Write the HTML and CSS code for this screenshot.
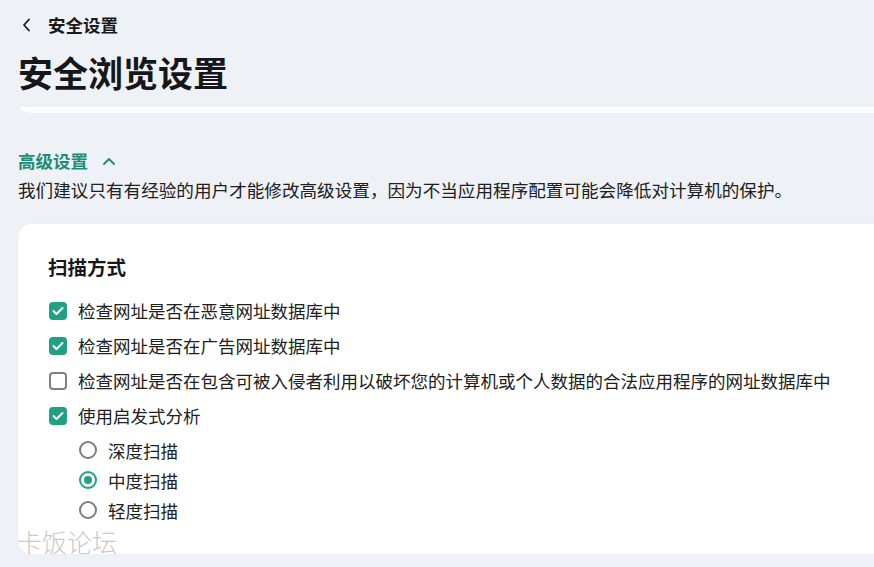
FILE: index.html
```html
<!DOCTYPE html>
<html lang="zh-CN">
<head>
<meta charset="utf-8">
<title>安全浏览设置</title>
<link rel="stylesheet" href="styles.css">
</head>
<body>
<div class="page">
  <div class="topbar">
    <svg class="back" width="12" height="14" viewBox="0 0 12 14"><path d="M8 1.5 L3 7 L8 12.5" fill="none" stroke="#1a1a1a" stroke-width="1.8" stroke-linecap="round" stroke-linejoin="round"/></svg>
    <span class="crumb">安全设置</span>
  </div>
  <h1 class="title">安全浏览设置</h1>
  <div class="prev-card"></div>

  <div class="adv-head">
    <span class="adv-title">高级设置</span>
    <svg class="up" width="14" height="10" viewBox="0 0 14 10"><path d="M2 8 L7 3 L12 8" fill="none" stroke="#1d8c74" stroke-width="1.8" stroke-linecap="round" stroke-linejoin="round"/></svg>
  </div>
  <p class="desc">我们建议只有有经验的用户才能修改高级设置，因为不当应用程序配置可能会降低对计算机的保护。</p>

  <div class="card">
    <h2 class="card-title">扫描方式</h2>
    <div class="checks">
      <div class="row"><span class="cb on"><svg width="12" height="10" viewBox="0 0 12 10"><path d="M1.5 5 L4.5 8 L10.5 2" fill="none" stroke="#fff" stroke-width="2" stroke-linecap="round" stroke-linejoin="round"/></svg></span><span>检查网址是否在恶意网址数据库中</span></div>
      <div class="row"><span class="cb on"><svg width="12" height="10" viewBox="0 0 12 10"><path d="M1.5 5 L4.5 8 L10.5 2" fill="none" stroke="#fff" stroke-width="2" stroke-linecap="round" stroke-linejoin="round"/></svg></span><span>检查网址是否在广告网址数据库中</span></div>
      <div class="row"><span class="cb"></span><span>检查网址是否在包含可被入侵者利用以破坏您的计算机或个人数据的合法应用程序的网址数据库中</span></div>
      <div class="row"><span class="cb on"><svg width="12" height="10" viewBox="0 0 12 10"><path d="M1.5 5 L4.5 8 L10.5 2" fill="none" stroke="#fff" stroke-width="2" stroke-linecap="round" stroke-linejoin="round"/></svg></span><span>使用启发式分析</span></div>
    </div>
    <div class="radios">
      <div class="rrow"><span class="rb"></span><span>深度扫描</span></div>
      <div class="rrow"><span class="rb on"></span><span>中度扫描</span></div>
      <div class="rrow"><span class="rb"></span><span>轻度扫描</span></div>
    </div>
  </div>
  <div class="watermark">卡饭论坛</div>
</div>
</body>
</html>
```

FILE: styles.css
```css
html, body {
  margin: 0;
  padding: 0;
}
body {
  background: #eef1f6;
  font-family: "Noto Sans CJK SC", "Noto Sans", sans-serif;
  color: #1f1f1f;
  overflow: hidden;
  width: 874px;
  height: 567px;
}
.page {
  position: relative;
  padding: 12px 0 0 18px;
  height: 555px;
}
.topbar {
  height: 26px;
  display: flex;
  align-items: center;
}
.back {
  margin-left: 3px;
  margin-right: 15px;
  display: block;
}
.crumb {
  font-size: 17.5px;
  font-weight: 700;
  line-height: 26px;
  color: #1a1a1a;
}
.title {
  margin: 12px 0 0;
  font-size: 35px;
  line-height: 44px;
  font-weight: 700;
  color: #15171a;
}
.prev-card {
  margin-top: 13px;
  margin-left: 2px;
  margin-right: -20px;
  height: 6px;
  background: #ffffff;
  border-bottom-left-radius: 14px 6px;
}
.adv-head {
  margin-top: 35px;
  height: 26px;
  display: flex;
  align-items: center;
}
.adv-title {
  font-size: 17.5px;
  font-weight: 700;
  line-height: 26px;
  color: #1d8c74;
}
.up {
  margin-left: 14px;
  display: block;
}
.desc {
  margin: 3px 0 0;
  font-size: 17.6px;
  line-height: 26px;
  color: #202020;
  white-space: nowrap;
}
.card {
  margin-top: 21px;
  margin-right: -30px;
  background: #ffffff;
  border-radius: 14px;
  padding: 29px 0 29px 30px;
  box-shadow: 0 0 2px rgba(0, 0, 0, 0.04);
}
.card-title {
  margin: 0;
  font-size: 19.5px;
  line-height: 28px;
  font-weight: 700;
  color: #16181b;
}
.checks {
  margin-top: 12px;
}
.row {
  height: 35px;
  display: flex;
  align-items: center;
  font-size: 17.5px;
  color: #202020;
  white-space: nowrap;
}
.cb {
  box-sizing: border-box;
  width: 18px;
  height: 18px;
  margin-left: 1px;
  margin-right: 11px;
  border: 2px solid #808080;
  border-radius: 4px;
  display: flex;
  align-items: center;
  justify-content: center;
  flex: none;
  background: #fff;
}
.cb.on {
  border-color: #22a083;
  background: #22a083;
}
.radios {
  margin-top: 2px;
  padding-left: 31px;
}
.rrow {
  height: 30px;
  display: flex;
  align-items: center;
  font-size: 17.5px;
  color: #202020;
}
.rb {
  box-sizing: border-box;
  width: 18px;
  height: 18px;
  border-radius: 50%;
  border: 2px solid #7d7d7d;
  margin-right: 11px;
  flex: none;
  position: relative;
  background: #fff;
}
.rb.on {
  border-color: #22a083;
}
.rb.on::after {
  content: "";
  position: absolute;
  left: 3px;
  top: 3px;
  width: 8px;
  height: 8px;
  border-radius: 50%;
  background: #22a083;
}
.watermark {
  position: absolute;
  left: 17px;
  top: 525px;
  font-size: 25px;
  line-height: 32px;
  font-weight: 300;
  color: #c9c9c9;
}
```
